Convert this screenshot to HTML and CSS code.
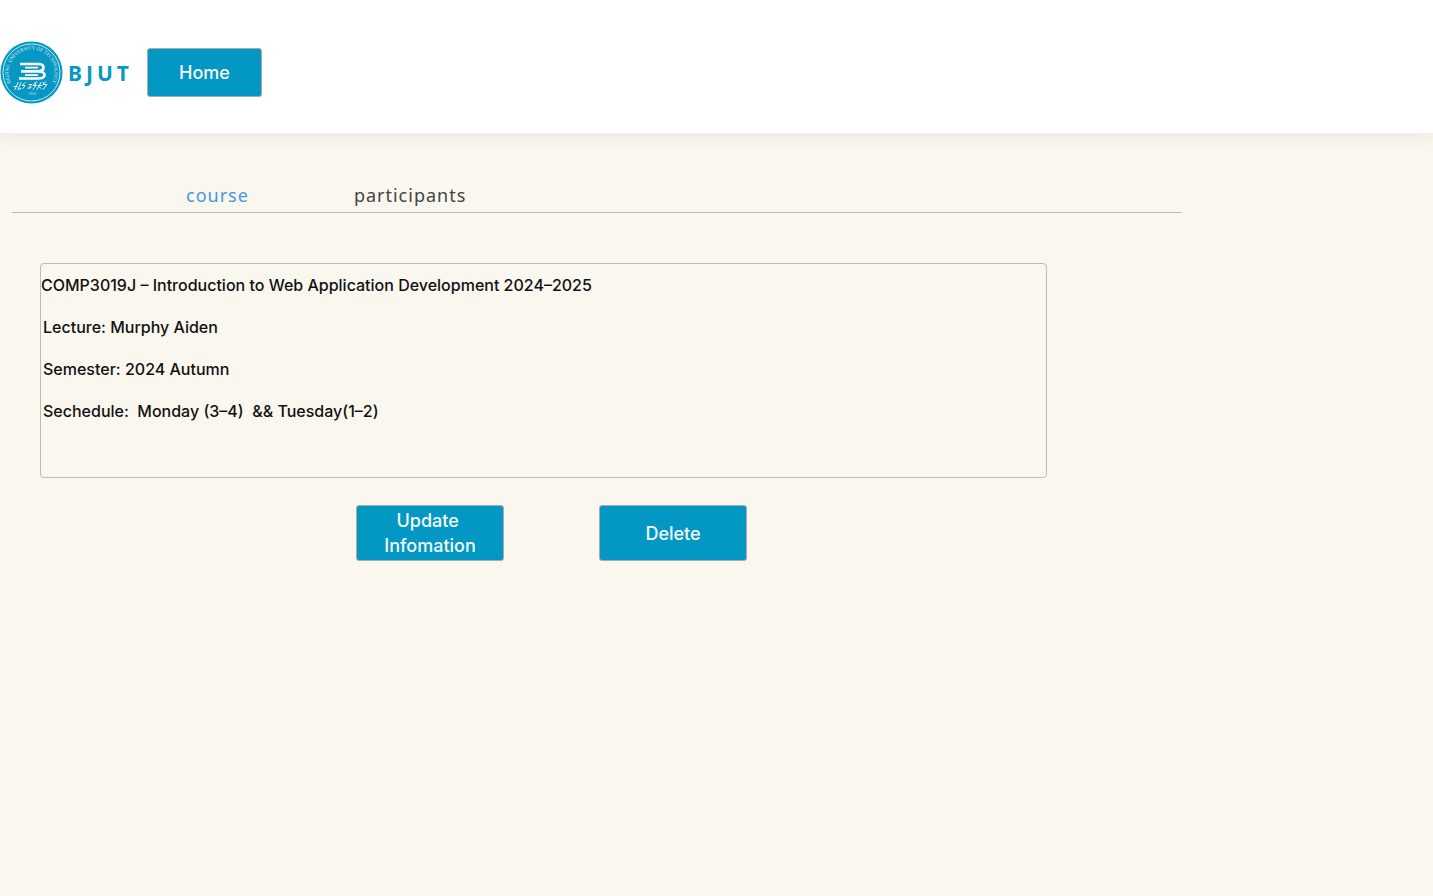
FILE: index.html
```html
<!DOCTYPE html>
<html lang="en">
<head>
<meta charset="utf-8">
<meta name="viewport" content="width=device-width, initial-scale=1">
<title>BJUT Course</title>
<link rel="stylesheet" href="styles.css">
</head>
<body>
<header class="header">
  <a class="brand" href="#">
    <svg class="brand-logo" viewBox="0 0 64 64" aria-hidden="true">
      <circle cx="31.500" cy="32" r="31" fill="#0698c3"/>
      <circle cx="31.500" cy="32" r="28.500" fill="none" stroke="#d9eff6" stroke-width=".9"/>
      <defs><path id="ring" d="M20 52A23 23 0 1 1 43 52"/></defs>
      <text class="ring-text"><textPath href="#ring" startOffset="50%">BEIJING UNIVERSITY OF TECHNOLOGY</textPath></text>
      <g fill="none" stroke="#fff">
        <path stroke-width="2.600" stroke-linejoin="round" d="M20 23.500H38q5.500 0 5.500 3.500t-5.500 3.800H21M21 31H38q6.500 0 6.500 3.500t-6.500 3.500H19"/>
        <path stroke-width="1.800" d="M25 27.200H38M25 34.600H38"/>
        <path stroke-width=".9" stroke-linecap="round" stroke-linejoin="round" d="M18 42l-3 7M14 46h3M21 42l-3 7 3-1M25 42l-3 3h3l-2 3M29 44h3l-4 4 3-1M37 41l-4 4h3l-3 4M35 42l1 3M41 42l-4 7M38 45h4M39 46l2 2M46 41l-3 3h4l-4 5M43 42l1 2"/>
      </g>
      <text class="year-text" x="32" y="54">1960</text>
    </svg>
    <span class="brand-name">BJUT</span>
  </a>
  <button class="button button-home" type="button">Home</button>
</header>
<main class="main">
  <nav class="tabs" aria-label="Course sections">
    <a class="tab tab-active" href="#course" aria-current="page">course</a>
    <a class="tab" href="#participants">participants</a>
  </nav>
  <section class="content" id="course">
    <div class="card">
      <h1 class="card-title">COMP3019J – Introduction to Web Application Development 2024–2025</h1>
      <p class="card-line">Lecture: Murphy Aiden</p>
      <p class="card-line">Semester: 2024 Autumn</p>
      <p class="card-line">Sechedule:&nbsp; Monday (3–4)&nbsp; &amp;&amp; Tuesday(1–2)</p>
    </div>
    <div class="actions">
      <button class="button button-action" type="button">Update&nbsp;<br>Infomation</button>
      <button class="button button-action" type="button">Delete</button>
    </div>
  </section>
</main>
</body>
</html>
```
FILE: styles.css
```css
* { box-sizing: border-box; }

body {
  margin: 0;
  min-height: 100vh;
  background: #faf7ef;
  color: #111;
  font-family: Inter, "Liberation Sans", sans-serif;
}

.header {
  display: flex;
  align-items: center;
  gap: 14px;
  padding: 40px 0 28px;
  background: #fff;
  box-shadow: 0 4px 16px rgba(0, 20, 30, 0.07);
}

.brand {
  display: flex;
  align-items: center;
  gap: 4px;
  color: #0698c3;
  text-decoration: none;
}

.brand-logo {
  display: block;
  width: 64px;
  height: 65px;
}

.ring-text {
  fill: #d9eff6;
  font: 5px "Liberation Serif", serif;
  text-anchor: middle;
}

.year-text {
  fill: #b5dfec;
  font: 4px "Liberation Serif", serif;
  text-anchor: middle;
}

.brand-name {
  font: 700 21px/28px "Noto Sans", sans-serif;
  letter-spacing: 4px;
}

.button {
  border: 1px solid #aaa;
  border-radius: 3px;
  background: #0397c4;
  color: #f3fafc;
  font: 500 18px/25px Inter, "Liberation Sans", sans-serif;
  cursor: pointer;
}

.button-home {
  width: 115px;
  height: 49px;
}

.main {
  padding: 46px 12px;
}

.tabs {
  display: flex;
  gap: 105px;
  max-width: 1170px;
  padding-left: 174px;
  border-bottom: 1px solid #bbb;
}

.tab {
  padding: 4px 0;
  color: #444;
  font: 400 18px/25px "Noto Sans", sans-serif;
  letter-spacing: 1px;
  text-decoration: none;
}

.tab-active { color: #4199e8; }

.content {
  max-width: 1035px;
  padding: 50px 0 0 28px;
}

.card {
  padding: 0 0 45px;
  border: 1px solid #bbb;
  border-radius: 4px;
}

.card-title,
.card-line {
  margin: 0;
  font-size: 16px;
  font-weight: 500;
  line-height: 42px;
}

.card-line { padding-left: 2px; }

.actions {
  display: flex;
  justify-content: center;
  gap: 95px;
  padding: 27px 0 27px 16px;
}

.button-action {
  width: 148px;
  min-height: 56px;
  padding: 2px 12px;
}
```
